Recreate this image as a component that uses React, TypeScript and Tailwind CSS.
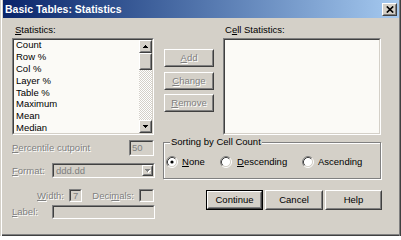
import React from "react";

const F = "font-['Liberation_Sans',Arial,sans-serif]";

function Raised({
  className = "",
  innerClassName = "",
  children,
}: {
  className?: string;
  innerClassName?: string;
  children?: React.ReactNode;
}) {
  return (
    <div
      className={`border border-t-white border-l-white border-r-[#404040] border-b-[#404040] bg-[#d4d0c8] ${className}`}
    >
      <div
        className={`w-full h-full border border-t-[#d4d0c8] border-l-[#d4d0c8] border-r-[#808080] border-b-[#808080] ${innerClassName}`}
      >
        {children}
      </div>
    </div>
  );
}

function Sunken({
  className = "",
  innerClassName = "",
  children,
}: {
  className?: string;
  innerClassName?: string;
  children?: React.ReactNode;
}) {
  return (
    <div
      className={`border border-t-[#808080] border-l-[#808080] border-r-white border-b-white ${className}`}
    >
      <div
        className={`w-full h-full border border-t-[#404040] border-l-[#404040] border-r-[#d4d0c8] border-b-[#d4d0c8] ${innerClassName}`}
      >
        {children}
      </div>
    </div>
  );
}

function Dis({ children }: { children: React.ReactNode }) {
  return (
    <span className="text-[#808080] [text-shadow:1px_1px_0_#ffffff]">
      {children}
    </span>
  );
}

function UpArrow() {
  return (
    <svg width="5" height="3" shapeRendering="crispEdges">
      <path d="M2 0h1v1h1v1h1v1H0V2h1V1h1z" fill="#000" />
    </svg>
  );
}

function DownArrow({ color = "#000" }: { color?: string }) {
  return (
    <svg width="5" height="3" shapeRendering="crispEdges">
      <path d="M0 0h5v1h-1v1h-1v1h-1V2H1V1H0z" fill={color} />
    </svg>
  );
}

function Radio({ checked = false }: { checked?: boolean }) {
  return (
    <svg width="12" height="12" viewBox="0 0 12 12" className="shrink-0">
      <circle cx="6" cy="6" r="4.5" fill="#ffffff" />
      <path d="M2.11 9.89 A5.5 5.5 0 0 1 9.89 2.11" stroke="#808080" strokeWidth="1" fill="none" />
      <path d="M9.89 2.11 A5.5 5.5 0 0 1 2.11 9.89" stroke="#ffffff" strokeWidth="1" fill="none" />
      <path d="M2.82 9.18 A4.5 4.5 0 0 1 9.18 2.82" stroke="#404040" strokeWidth="1" fill="none" />
      <path d="M9.18 2.82 A4.5 4.5 0 0 1 2.82 9.18" stroke="#d4d0c8" strokeWidth="1" fill="none" />
      {checked && <circle cx="6" cy="6" r="1.6" fill="#000" />}
    </svg>
  );
}

const items = ["Count", "Row %", "Col %", "Layer %", "Table %", "Maximum", "Mean", "Median"];

export default function App() {
  return (
    <div
      className={`${F} text-[9.5px] leading-[12px] text-black w-[401px] h-[236px] bg-[#d4d0c8] flex flex-col pl-[3px] pr-[2px] pb-[3px] overflow-hidden shadow-[inset_1px_0_0_#d4d0c8,inset_2px_0_0_#ffffff,inset_-1px_0_0_#404040,inset_-2px_0_0_#808080,inset_0_-1px_0_#404040,inset_0_-2px_0_#808080]`}
    >
      {/* Title bar */}
      <div className="h-[18px] shrink-0 flex items-center bg-linear-to-r from-[#0a246a] to-[#a6caf0]">
        <div className="pl-[2px] text-white font-bold text-[10.5px] leading-[18px] flex-1">
          Basic Tables: Statistics
        </div>
        <Raised className="w-[15px] h-[13px] mr-[2px]" innerClassName="flex items-center justify-center">
          <svg width="8" height="7" viewBox="0 0 8 7">
            <path d="M0.8 0.5 L7.2 6.5 M7.2 0.5 L0.8 6.5" stroke="#000" strokeWidth="1.7" />
          </svg>
        </Raised>
      </div>

      {/* Body */}
      <div className="flex flex-1 pl-[9px]">
        {/* Left column */}
        <div className="w-[143px] flex flex-col">
          <div className="mt-[6px] h-[12px] pl-[3px]">
            <u>S</u>tatistics:
          </div>
          <Sunken className="mt-[2px] w-[142px] h-[97px]" innerClassName="flex bg-[#fbfaf6]">
            <div className="flex-1 flex flex-col -mt-[1px] pl-[2px] overflow-hidden">
              {items.map((t) => (
                <div key={t} className="h-[11.9px] leading-[12px] shrink-0">
                  {t}
                </div>
              ))}
            </div>
            <div className="w-[13px] h-full flex flex-col">
              <Raised className="w-[13px] h-[13px] shrink-0" innerClassName="flex items-center justify-center">
                <UpArrow />
              </Raised>
              <Raised className="w-[13px] h-[17px] shrink-0" />
              <div className="flex-1 [background:repeating-conic-gradient(#d4d0c8_0_25%,#ffffff_0_50%)_0_0/2px_2px]" />
              <Raised className="w-[13px] h-[13px] shrink-0" innerClassName="flex items-center justify-center">
                <DownArrow />
              </Raised>
            </div>
          </Sunken>

          <div className="mt-[5px] h-[16px] flex items-center">
            <Dis>
              <u>P</u>ercentile cutpoint
            </Dis>
            <Sunken className="ml-auto mr-[1px] w-[25px] h-[16px]" innerClassName="flex items-center pl-[1px] text-[#808080]">
              50
            </Sunken>
          </div>

          <div className="mt-[7px] h-[15px] flex items-center">
            <Dis>
              <u>F</u>ormat:
            </Dis>
            <Sunken className="ml-auto w-[103px] h-[15px]" innerClassName="flex items-center">
              <span className="flex-1 pl-[2px] text-[#808080]">ddd.dd</span>
              <Raised className="w-[11px] h-full" innerClassName="flex items-center justify-center relative">
                <span className="relative">
                  <span className="absolute left-[1px] top-[1px] flex">
                    <DownArrow color="#ffffff" />
                  </span>
                  <span className="relative flex">
                    <DownArrow color="#808080" />
                  </span>
                </span>
              </Raised>
            </Sunken>
          </div>

          <div className="mt-[11px] h-[13px] flex items-center">
            <span className="w-[52px] text-right">
              <Dis>
                <u>W</u>idth:
              </Dis>
            </span>
            <Sunken className="ml-[5px] w-[13px] h-[13px]" innerClassName="flex items-center pl-[2px] text-[#808080]">
              7
            </Sunken>
            <span className="w-[52px] text-right">
              <Dis>
                Deci<u>m</u>als:
              </Dis>
            </span>
            <Sunken className="ml-[5px] w-[15px] h-[13px]" />
          </div>

          <div className="mt-[3px] h-[14px] flex items-center">
            <Dis>
              <u>L</u>abel:
            </Dis>
            <Sunken className="ml-auto w-[103px] h-[14px]" />
          </div>
        </div>

        {/* Right area */}
        <div className="ml-[8px] w-[219px] flex flex-col">
          <div className="flex">
            <div className="ml-[1px] w-[50px] flex flex-col">
              <Raised className="mt-[31px] h-[18px]" innerClassName="flex items-center justify-center">
                <Dis>
                  <u>A</u>dd
                </Dis>
              </Raised>
              <Raised className="mt-[5px] h-[18px]" innerClassName="flex items-center justify-center">
                <Dis>
                  <u>C</u>hange
                </Dis>
              </Raised>
              <Raised className="mt-[4px] h-[18px]" innerClassName="flex items-center justify-center">
                <Dis>
                  <u>R</u>emove
                </Dis>
              </Raised>
            </div>
            <div className="ml-[9px] w-[158px] flex flex-col">
              <div className="mt-[6px] h-[12px] pl-[2px]">
                C<u>e</u>ll Statistics:
              </div>
              <Sunken className="mt-[2px] h-[97px]" innerClassName="bg-[#fbfaf6]" />
            </div>
          </div>

          <fieldset className="mt-[1px] w-[218px] border border-[#808080] shadow-[inset_1px_1px_0_#ffffff,1px_1px_0_#ffffff] p-0 m-0 min-w-0">
            <legend className="ml-[6px] px-[1px] bg-[#d4d0c8] h-[12px] leading-[12px]">
              Sorting by Cell Count
            </legend>
            <div className="mt-[8px] mb-[10px] h-[12px] flex items-center pl-[2px]">
              <div className="w-[54px] flex items-center gap-[4px]">
                <Radio checked />
                <span>
                  <u>N</u>one
                </span>
              </div>
              <div className="w-[82px] flex items-center gap-[5px]">
                <Radio />
                <span>
                  <u>D</u>escending
                </span>
              </div>
              <div className="flex items-center gap-[4px]">
                <Radio />
                <span>Ascending</span>
              </div>
            </div>
          </fieldset>

          <div className="mt-[11px] flex justify-end gap-[2px]">
            <div className="w-[57px] h-[20px] border border-black">
              <Raised className="w-full h-full" innerClassName="flex items-center justify-center">
                Continue
              </Raised>
            </div>
            <Raised className="w-[58px] h-[20px]" innerClassName="flex items-center justify-center">
              Cancel
            </Raised>
            <Raised className="w-[57px] h-[20px]" innerClassName="flex items-center justify-center">
              Help
            </Raised>
          </div>
        </div>
      </div>
    </div>
  );
}
